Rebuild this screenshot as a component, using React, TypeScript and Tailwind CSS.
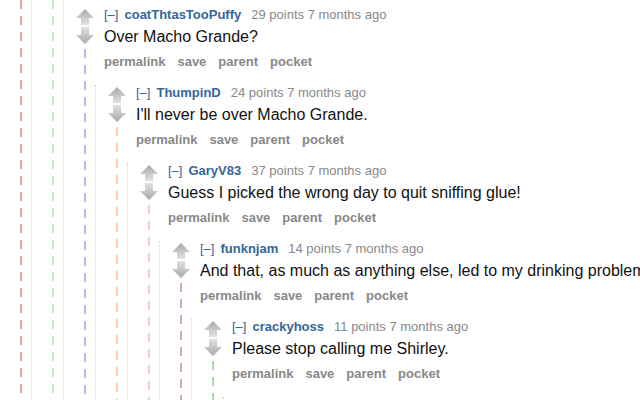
import React from "react";

type Reply = {
  user: string;
  points: number;
  age: string;
  body: string;
  replies?: Reply[];
};

const thread: Reply = {
  user: "coatThtasTooPuffy",
  points: 29,
  age: "7 months ago",
  body: "Over Macho Grande?",
  replies: [
    {
      user: "ThumpinD",
      points: 24,
      age: "7 months ago",
      body: "I'll never be over Macho Grande.",
      replies: [
        {
          user: "GaryV83",
          points: 37,
          age: "7 months ago",
          body: "Guess I picked the wrong day to quit sniffing glue!",
          replies: [
            {
              user: "funknjam",
              points: 14,
              age: "7 months ago",
              body: "And that, as much as anything else, led to my drinking problem.",
              replies: [
                {
                  user: "crackyhoss",
                  points: 11,
                  age: "7 months ago",
                  body: "Please stop calling me Shirley.",
                  replies: [],
                },
              ],
            },
          ],
        },
      ],
    },
  ],
};

// one dashed thread colour per depth
const lines = [
  "bg-[repeating-linear-gradient(to_bottom,#f0a3a6_0px,#f0a3a6_9px,transparent_9px,transparent_16px)]",
  "bg-[repeating-linear-gradient(to_bottom,#bff0c9_0px,#bff0c9_9px,transparent_9px,transparent_16px)]",
  "bg-[repeating-linear-gradient(to_bottom,#afbbf0_0px,#afbbf0_9px,transparent_9px,transparent_16px)]",
  "bg-[repeating-linear-gradient(to_bottom,#fcd0b0_0px,#fcd0b0_9px,transparent_9px,transparent_16px)]",
  "bg-[repeating-linear-gradient(to_bottom,#fcc3e4_0px,#fcc3e4_9px,transparent_9px,transparent_16px)]",
  "bg-[repeating-linear-gradient(to_bottom,#d6ada2_0px,#d6ada2_9px,transparent_9px,transparent_16px)]",
  "bg-[repeating-linear-gradient(to_bottom,#a9d8a9_0px,#a9d8a9_9px,transparent_9px,transparent_16px)]",
];

const UpArrow = () => (
  <svg width="18" height="16" viewBox="0 0 18 16">
    <defs>
      <linearGradient id="upg" x1="0" y1="0" x2="0" y2="1">
        <stop offset="0" stopColor="#a8a8a8" />
        <stop offset="1" stopColor="#e2e2e2" />
      </linearGradient>
    </defs>
    <path d="M9 0L18 9H13V16H5V9H0Z" fill="url(#upg)" />
  </svg>
);

const DownArrow = () => (
  <svg width="18" height="17" viewBox="0 0 18 17">
    <defs>
      <linearGradient id="downg" x1="0" y1="0" x2="0" y2="1">
        <stop offset="0" stopColor="#e2e2e2" />
        <stop offset="1" stopColor="#a8a8a8" />
      </linearGradient>
    </defs>
    <path d="M5 0H13V8H18L9 17L0 8H5Z" fill="url(#downg)" />
  </svg>
);

const Comment = ({ c, depth }: { c: Reply; depth: number }) => (
  <div className="relative">
    <div className={`absolute left-[20px] top-[42px] bottom-0 w-[2px] ${lines[depth]}`} />
    <div className="flex">
      <div className="flex flex-col gap-[2px] pl-[12px] pt-[2px]">
        <UpArrow />
        <DownArrow />
      </div>
      <div className="ml-[10px] whitespace-nowrap">
        <div className="text-[13px] leading-4">
          <span className="text-[#336699]">[–]</span>
          <span className="ml-[6px] font-bold text-[#336699]">{c.user}</span>
          <span className="ml-[10px] text-[#888888]">
            {c.points} points {c.age}
          </span>
        </div>
        <div className="mt-1 text-base leading-5 text-[#111111]">{c.body}</div>
        <div className="mt-[7px] flex gap-3 text-[13px] font-bold leading-4 text-[#888888]">
          <span>permalink</span>
          <span>save</span>
          <span>parent</span>
          <span>pocket</span>
        </div>
      </div>
    </div>
    <div className="ml-[31px] mt-[15px] border-l border-dotted border-[#ccccee]">
      {c.replies && c.replies.length > 0 ? (
        c.replies.map((r) => <Comment key={r.user} c={r} depth={depth + 1} />)
      ) : (
        <div className="h-[20px]" />
      )}
    </div>
  </div>
);

export default function App() {
  return (
    <div className="h-[400px] w-[640px] overflow-hidden bg-white font-['Liberation_Sans',Arial,sans-serif]">
      <div className="relative min-h-full">
        <div className={`absolute left-[20px] top-0 bottom-0 w-[2px] ${lines[0]}`} />
        <div className="ml-[31px] min-h-[400px] border-l border-dotted border-[#ccccee]">
          <div className="relative min-h-[400px]">
            <div className={`absolute left-[20px] top-0 bottom-0 w-[2px] ${lines[1]}`} />
            <div className="ml-[31px] min-h-[400px] border-l border-dotted border-[#ccccee] pt-[7px]">
              <Comment c={thread} depth={2} />
            </div>
          </div>
        </div>
      </div>
    </div>
  );
}
